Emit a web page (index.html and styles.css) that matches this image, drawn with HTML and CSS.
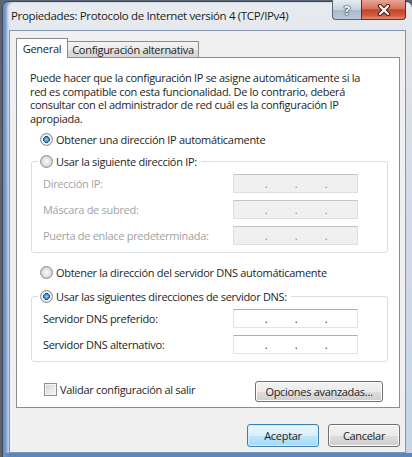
FILE: index.html
```html
<!DOCTYPE html>
<html lang="es">
<head>
  <meta charset="UTF-8" />
  <meta name="viewport" content="width=device-width, initial-scale=1.0"/>
  <title>Propiedades: Protocolo de Internet versión 4 (TCP/IPv4)</title>
  <link rel="stylesheet" href="styles.css">
</head>
<body>
  <div class="window">
    <div class="titlebar">
      <span class="title">Propiedades: Protocolo de Internet versión 4 (TCP/IPv4)</span>
      <div class="caption-buttons">
        <span class="cap-btn help">?</span>
        <span class="cap-btn close">
          <svg width="14" height="12" viewBox="0 0 14 12">
            <path d="M3 2 L11 10 M11 2 L3 10" stroke="#4a1c14" stroke-width="4.2" stroke-linecap="round" fill="none"/>
            <path d="M3 2 L11 10 M11 2 L3 10" stroke="#fff" stroke-width="2.2" stroke-linecap="round" fill="none"/>
          </svg>
        </span>
      </div>
    </div>

    <div class="client">
      <div class="tabs">
        <span class="tab active">General</span>
        <span class="tab">Configuración alternativa</span>
      </div>

      <div class="tab-page">
        <p class="intro">Puede hacer que la configuración IP se asigne automáticamente si la red es compatible con esta funcionalidad. De lo contrario, deberá consultar con el administrador de red cuál es la configuración IP apropiada.</p>

        <label class="radio-row"><span class="radio checked"></span>Obtener una dirección IP automáticamente</label>

        <fieldset class="group">
          <legend><span class="radio"></span>Usar la siguiente dirección IP:</legend>
          <div class="field disabled"><span>Dirección IP:</span><span class="ip-box"><span>.</span><span>.</span><span>.</span></span></div>
          <div class="field disabled"><span>Máscara de subred:</span><span class="ip-box"><span>.</span><span>.</span><span>.</span></span></div>
          <div class="field disabled"><span>Puerta de enlace predeterminada:</span><span class="ip-box"><span>.</span><span>.</span><span>.</span></span></div>
        </fieldset>

        <label class="radio-row gap-top"><span class="radio"></span>Obtener la dirección del servidor DNS automáticamente</label>

        <fieldset class="group dns">
          <legend><span class="radio checked"></span>Usar las siguientes direcciones de servidor DNS:</legend>
          <div class="field"><span>Servidor DNS preferido:</span><span class="ip-box"><span>.</span><span>.</span><span>.</span></span></div>
          <div class="field"><span>Servidor DNS alternativo:</span><span class="ip-box"><span>.</span><span>.</span><span>.</span></span></div>
        </fieldset>

        <div class="options-row">
          <label class="check-row"><span class="checkbox"></span>Validar configuración al salir</label>
          <button class="button wide">Opciones avanzadas...</button>
        </div>
      </div>

      <div class="dialog-buttons">
        <button class="button default">Aceptar</button>
        <button class="button">Cancelar</button>
      </div>
    </div>
  </div>
</body>
</html>
```

FILE: styles.css
```css
body {
  margin: 0;
  height: 457px;
  overflow: hidden;
  background: #5b6472;
  font-family: "Open Sans", "Noto Sans", sans-serif;
  font-size: 11px;
  letter-spacing: -0.3px;
  color: #1e1e1e;
}
.window {
  box-sizing: border-box;
  width: 411px;
  height: 470px;
  margin: 1px 0 0 2px;
  padding: 0 6px;
  border: 1px solid #3f4753;
  border-radius: 7px 7px 0 0;
  background: linear-gradient(#e8ebef, #d6dee8 120px, #c6d4e6 451px, #5a86c6 451px);
  box-shadow: inset 5px 0 3px -1px #6a90cb;
}
.titlebar {
  display: flex;
  height: 28px;
}
.title {
  padding: 6px 0 0 2px;
  font-size: 11.5px;
  letter-spacing: -0.35px;
  line-height: 16px;
  color: #1b1b1b;
  text-shadow: 0 0 6px rgba(255, 255, 255, 0.9);
}
.caption-buttons {
  display: flex;
  margin: -2px 0 0 auto;
  height: 20px;
}
.cap-btn {
  box-sizing: border-box;
  display: flex;
  align-items: center;
  justify-content: center;
  height: 20px;
  border: 1px solid #5a6576;
  border-top: none;
}
.help {
  width: 29px;
  border-right: none;
  border-radius: 0 0 0 4px;
  background: linear-gradient(#e6ebf1, #c7d2df 50%, #a9b8cb 51%, #b9c8da);
  color: #fff;
  font-weight: bold;
  font-size: 13px;
  text-shadow: 0 0 1px #25354b, 0 0 1px #25354b, 0 0 2px #25354b;
}
.close {
  width: 45px;
  border-color: #6b2c22;
  border-radius: 0 0 4px 0;
  background: linear-gradient(#e8a595, #d6735f 45%, #c4432d 52%, #cf5a3f 80%, #e3906f);
}
.client {
  box-sizing: border-box;
  height: 423px;
  padding: 7px 5px 0 6px;
  border: 1px solid #8497b0;
  background: #f0f0f0;
}
.tabs {
  display: flex;
  align-items: flex-end;
  height: 19px;
}
.tab {
  box-sizing: border-box;
  height: 16px;
  width: 131px;
  border: 1px solid #898c95;
  border-bottom: none;
  border-left: none;
  background: linear-gradient(#f3f3f3, #ebebeb 50%, #dddddd 51%, #d6d6d6);
  text-align: center;
  line-height: 15px;
}
.tab.active {
  position: relative;
  width: 52px;
  height: 20px;
  margin-bottom: -1px;
  border-left: 1px solid #898c95;
  background: #fff;
  line-height: 19px;
}
.tab-page {
  box-sizing: border-box;
  height: 351px;
  padding: 13px 11px 0 14px;
  border: 1px solid #898c95;
  background: #fff;
}
.intro {
  max-width: 342px;
  margin: 0 0 0 -1px;
  line-height: 13.5px;
}
.radio-row {
  display: flex;
  align-items: center;
  gap: 3px;
  height: 16px;
  margin-top: 6px;
  padding-left: 9px;
}
.radio-row.gap-top {
  margin-top: 11px;
}
.radio {
  box-sizing: border-box;
  width: 13px;
  height: 13px;
  border: 1px solid #8f8f8f;
  border-radius: 50%;
  background: radial-gradient(circle closest-side, #fafafa 0, #e6e6e6 60%, #cdcdcd 100%);
}
.radio.checked {
  background: radial-gradient(circle closest-side, #9ad8f8 0, #3d8fcc 40%, #1e4f7c 58%, #ececec 66%, #f6f6f6 82%, #d0d0d0 100%);
}
.group {
  margin: 6px 0 0;
  padding: 5px 29px 7px 11px;
  border: 1px solid #d5dfe5;
  border-radius: 3px;
  min-width: 0;
}
.group.dns {
  margin-top: 8px;
}
.group legend {
  display: flex;
  align-items: center;
  gap: 3px;
  height: 16px;
  margin-left: -5px;
  padding: 0 4px 0 2px;
}
.field {
  display: flex;
  align-items: center;
  justify-content: space-between;
  height: 19px;
}
.field + .field {
  margin-top: 7px;
}
.ip-box {
  box-sizing: border-box;
  display: flex;
  width: 125px;
  height: 19px;
  padding-left: 17px;
  border: 1px solid #e2e3ea;
  border-top-color: #abadb3;
  background: #fff;
  line-height: 17px;
  color: #222;
}
.ip-box span {
  width: 30px;
  text-align: center;
}
.field.disabled {
  color: #a3a3a3;
}
.field.disabled .ip-box {
  border-color: #dedede;
  border-top-color: #c4c4c4;
  background: #f0f0f0;
  color: #8a8a8a;
}
.options-row {
  display: flex;
  justify-content: space-between;
  align-items: flex-start;
  margin-top: 19px;
  padding: 0 5px 0 13px;
}
.check-row {
  display: flex;
  align-items: center;
  gap: 3px;
  height: 15px;
  margin-top: 1px;
}
.checkbox {
  box-sizing: border-box;
  width: 13px;
  height: 13px;
  border: 1px solid #8f8f8f;
  background: linear-gradient(135deg, #d4d4d4, #f7f7f7);
  box-shadow: inset 0 0 0 1px #f4f4f4;
}
.button {
  box-sizing: border-box;
  width: 72px;
  height: 23px;
  padding: 0;
  border: 1px solid #707070;
  border-radius: 3px;
  background: linear-gradient(#f2f2f2, #ebebeb 50%, #dddddd 51%, #cfcfcf);
  box-shadow: inset 0 0 0 1px #fcfcfc;
  font-family: "Open Sans", "Noto Sans", sans-serif;
  font-size: 11px;
  letter-spacing: -0.3px;
  color: #1e1e1e;
}
.button.wide {
  width: 128px;
  height: 21px;
}
.button.default {
  border-color: #3c7fb1;
  background: linear-gradient(#eaf6fd, #d9f0fc 50%, #bee6fd 51%, #a7d9f5);
  box-shadow: inset 0 0 0 1px #d0f0fd;
}
.dialog-buttons {
  display: flex;
  justify-content: flex-end;
  gap: 9px;
  margin-top: 16px;
}
```
